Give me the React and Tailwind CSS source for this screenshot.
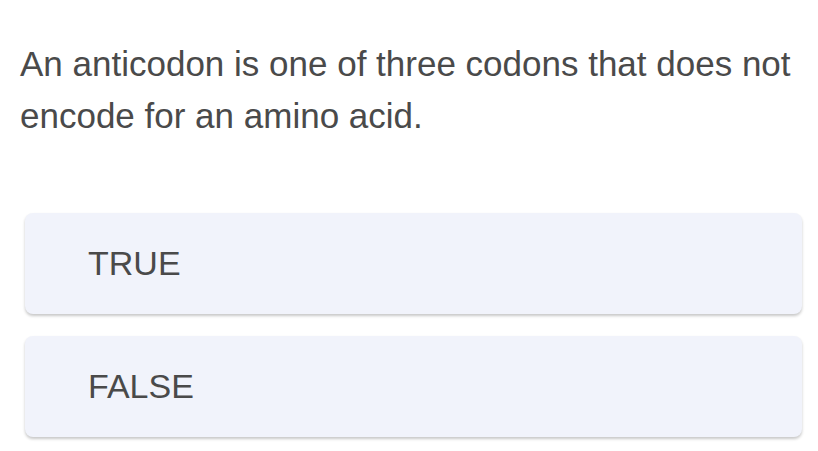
import React from 'react';

const options = ['TRUE', 'FALSE'];

export default function App() {
  return (
    <div className="min-h-screen w-[818px] bg-white font-['Liberation_Sans',Arial,sans-serif] text-[#4a4a4a]">
      <p className="pl-[20px] pr-[16px] pt-[38px] text-[35px] leading-[52px]">
        An anticodon is one of three codons that does not encode for an amino acid.
      </p>
      <div className="mt-[71px] ml-[25px] mr-[16px] flex flex-col gap-[22px]">
        {options.map((o) => (
          <button
            key={o}
            className="flex h-[101px] items-center rounded-[8px] bg-[#f1f3fb] pl-[63px] text-left text-[34px] shadow-[0_2px_3px_rgba(0,0,0,0.22)]"
          >
            {o}
          </button>
        ))}
      </div>
    </div>
  );
}
